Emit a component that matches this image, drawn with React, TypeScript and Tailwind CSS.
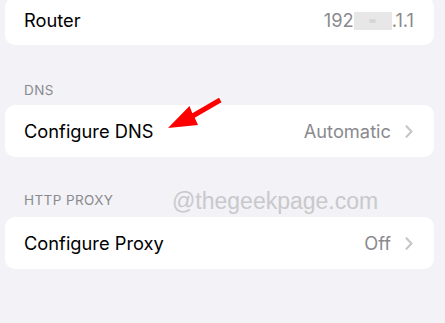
import React from "react";

const Chevron = () => (
  <svg width="8" height="13" viewBox="0 0 8 13" className="ml-[14px]">
    <path d="M1.5 1.2 L6.5 6.5 L1.5 11.8" fill="none" stroke="#c4c4c7" strokeWidth="2" strokeLinecap="round" strokeLinejoin="round" />
  </svg>
);

export default function App() {
  return (
    <div
      className="relative w-[445px] h-[323px] overflow-hidden bg-[#f2f2f7]"
      style={{ fontFamily: "Inter, 'Liberation Sans', sans-serif" }}
    >
      {/* Card 1 */}
      <div className="ml-[5px] mr-[11px] -mt-[3px] h-[48px] bg-white rounded-[10px] flex items-center pl-[19px] pr-[20px]">
        <span className="text-[18.3px] text-black flex-1">Router</span>
        <span className="text-[18.3px] text-[#8a8a8e] flex items-center">
          <span>192</span>
          <span className="relative w-[38px] h-[18px] bg-[#e7e7e8] flex items-center justify-center">
            <span className="w-[7px] h-[4px] rounded-full bg-[#d6d6d8]" />
          </span>
          <span>.1.1</span>
        </span>
      </div>

      {/* DNS header */}
      <div className="pb-[7px] pl-[24px] h-[60px] flex items-end">
        <span className="text-[13.5px] tracking-[0.4px] leading-[16px] text-[#8a8a8e]">DNS</span>
      </div>

      {/* Card 2 */}
      <div className="ml-[5px] mr-[11px] h-[52px] bg-white rounded-[10px] flex items-center pl-[19px] pr-[21px]">
        <span className="text-[18.3px] text-black flex-1 pt-[2px]">Configure DNS</span>
        <span className="text-[18.3px] text-[#8a8a8e] pt-[2px]">Automatic</span>
        <Chevron />
      </div>

      {/* HTTP PROXY header */}
      <div className="h-[60px] flex items-end pb-[9px] pl-[24px]">
        <span className="text-[13.5px] tracking-[0.4px] leading-[16px] text-[#8a8a8e]">HTTP PROXY</span>
      </div>

      {/* Card 3 */}
      <div className="ml-[5px] mr-[11px] h-[52px] bg-white rounded-[10px] flex items-center pl-[19px] pr-[21px]">
        <span className="text-[18.3px] text-black flex-1 pt-[2px]">Configure Proxy</span>
        <span className="text-[18.3px] text-[#8a8a8e] pt-[2px]">Off</span>
        <Chevron />
      </div>

      {/* Watermark */}
      <div
        className="absolute left-[172px] top-[188px] text-[23px] leading-[26px] text-[#c9c9cb] pointer-events-none"
        style={{ fontFamily: "'Liberation Sans', Arial, sans-serif" }}
      >
        @thegeekpage.com
      </div>

      {/* Red arrow */}
      <svg className="absolute left-0 top-0 pointer-events-none" width="445" height="323">
        <polygon
          points="219,97.8 192.3,113.3 189.5,106 168,128 198,125 194.7,117.7 221.5,102.3"
          fill="#ff0000"
        />
      </svg>
    </div>
  );
}
